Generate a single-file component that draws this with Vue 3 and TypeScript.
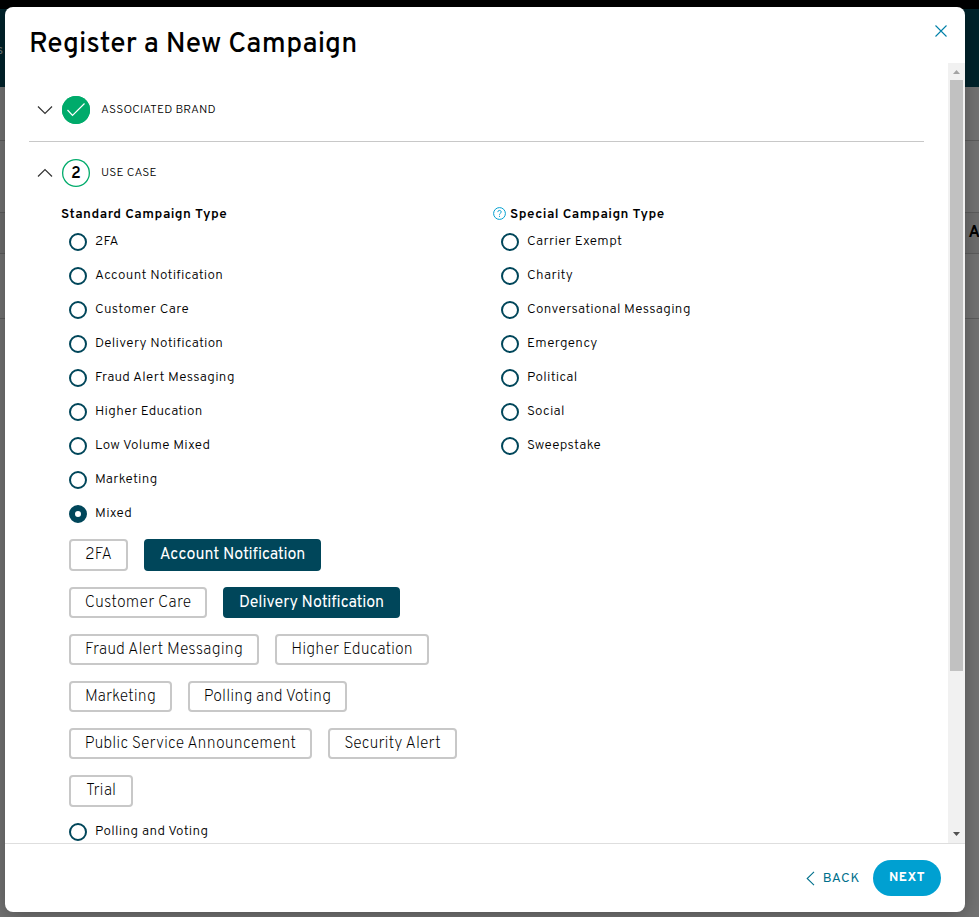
<script setup lang="ts">
import { ref } from 'vue'

interface Chip {
  label: string
  width: number
}

const standard: string[] = [
  '2FA',
  'Account Notification',
  'Customer Care',
  'Delivery Notification',
  'Fraud Alert Messaging',
  'Higher Education',
  'Low Volume Mixed',
  'Marketing',
  'Mixed',
]
const trailing: string[] = ['Polling and Voting']
const special: string[] = [
  'Carrier Exempt',
  'Charity',
  'Conversational Messaging',
  'Emergency',
  'Political',
  'Social',
  'Sweepstake',
]
const chips: Chip[][] = [
  [{ label: '2FA', width: 59 }, { label: 'Account Notification', width: 177 }],
  [{ label: 'Customer Care', width: 138 }, { label: 'Delivery Notification', width: 177 }],
  [{ label: 'Fraud Alert Messaging', width: 190 }, { label: 'Higher Education', width: 154 }],
  [{ label: 'Marketing', width: 103 }, { label: 'Polling and Voting', width: 159 }],
  [{ label: 'Public Service Announcement', width: 243 }, { label: 'Security Alert', width: 129 }],
  [{ label: 'Trial', width: 64 }],
]

const selected = ref('Mixed')
const picked = ref<string[]>(['Account Notification', 'Delivery Notification'])

function toggle(label: string): void {
  picked.value = picked.value.includes(label)
    ? picked.value.filter((p) => p !== label)
    : [...picked.value, label]
}
</script>

<template>
  <div class="screen">
    <div class="page">
      <div class="topbar"></div>
      <div class="nav"><span>s</span></div>
      <div class="row r1"></div>
      <div class="row r2"></div>
      <div class="row r3"><b>A</b></div>
      <div class="row r4"></div>
    </div>

    <section class="modal">
      <header class="head">
        <h1>Register a New Campaign</h1>
        <button class="close" aria-label="Close">
          <svg width="12" height="12" viewBox="0 0 12 12"><path d="M.5.5l11 11M11.5.5l-11 11" /></svg>
        </button>
      </header>

      <div class="body">
        <div class="content">
          <div class="step first">
            <svg class="chev" width="16" height="10" viewBox="0 0 16 10"><path d="M1 1.5l7 7 7-7" /></svg>
            <span class="badge done">
              <svg width="20" height="15" viewBox="0 0 20 15"><path d="M1.500 8l5 5.500L18.500 1.500" /></svg>
            </span>
            <span class="step-name">ASSOCIATED BRAND</span>
          </div>
          <div class="step second">
            <svg class="chev" width="16" height="10" viewBox="0 0 16 10"><path d="M1 8.5l7-7 7 7" /></svg>
            <span class="badge"><span class="num">2</span></span>
            <span class="step-name">USE CASE</span>
          </div>

          <div class="columns">
            <div class="column">
              <h2><span>Standard Campaign Type</span></h2>
              <label v-for="o in standard" :key="o" class="option" @click="selected = o">
                <i class="radio" :class="{ on: selected === o }"></i>
                <span>{{ o }}</span>
              </label>
              <div class="chips">
                <div v-for="(line, i) in chips" :key="i" class="chip-line">
                  <button
                    v-for="c in line"
                    :key="c.label"
                    class="chip"
                    :class="{ active: picked.includes(c.label) }"
                    :style="{ width: c.width + 'px' }"
                    @click="toggle(c.label)"
                  >{{ c.label }}</button>
                </div>
              </div>
              <label v-for="o in trailing" :key="o" class="option" @click="selected = o">
                <i class="radio" :class="{ on: selected === o }"></i>
                <span>{{ o }}</span>
              </label>
            </div>
            <div class="column">
              <h2 class="special">
                <svg width="13" height="13" viewBox="0 0 13 13">
                  <circle cx="6.5" cy="6.5" r="5.9" />
                  <path d="M4.8 5.1c0-2.3 3.4-2.2 3.4-.1 0 1.300-1.700 1.200-1.700 2.700M6.500 8.800v1.100" />
                </svg>
                <span>Special Campaign Type</span>
              </h2>
              <label v-for="o in special" :key="o" class="option" @click="selected = o">
                <i class="radio" :class="{ on: selected === o }"></i>
                <span>{{ o }}</span>
              </label>
            </div>
          </div>
        </div>
        <div class="scrollbar">
          <svg class="up" width="17" height="17" viewBox="0 0 17 17"><path d="M5 11l3.500-4 3.500 4z" /></svg>
          <div class="thumb"></div>
          <svg class="down" width="17" height="17" viewBox="0 0 17 17"><path d="M5 6h7L8.500 10z" /></svg>
        </div>
      </div>

      <footer class="foot">
        <button class="back">
          <svg width="9" height="15" viewBox="0 0 9 15"><path d="M8 .8L1.200 7.500 8 14.200" /></svg>
          <span>BACK</span>
        </button>
        <button class="next">NEXT</button>
      </footer>
    </section>
  </div>
</template>

<style>
body {
  overflow: hidden;
}
</style>

<style scoped>
* {
  box-sizing: border-box;
}
.screen {
  position: relative;
  height: 917px;
  overflow: hidden;
  padding: 7px 14px 5px 5px;
  font-family: Overpass, Roboto, "Liberation Sans", sans-serif;
  color: #000;
}
.page {
  position: absolute;
  inset: 0;
  background: #737373;
}
.topbar {
  height: 9px;
  background: #000;
}
.nav {
  height: 78px;
  padding-top: 34px;
  background: #00232b;
  color: #6b7678;
  font-size: 13px;
  line-height: 16px;
}
.nav span {
  margin-left: -3px;
}
.row {
  border-bottom: 1px solid #5d5d5d;
}
.r1 {
  height: 54px;
}
.r2 {
  height: 72px;
}
.r3 {
  display: flex;
  align-items: center;
  justify-content: flex-end;
  height: 41px;
  background: #6e6e6e;
  font-size: 16px;
}
.r3 b {
  margin-right: -1px;
}
.r4 {
  height: 65px;
}
.modal {
  position: relative;
  display: flex;
  flex-direction: column;
  height: 905px;
  border-radius: 8px;
  background: #fff;
  box-shadow: 0 3px 20px rgba(0, 0, 0, 0.3);
  overflow: hidden;
}
button {
  border: 0;
  padding: 0;
  background: none;
  font-family: inherit;
}
svg {
  display: block;
  flex: none;
  fill: none;
}
.head {
  display: flex;
  flex: none;
  justify-content: space-between;
  height: 56px;
  padding: 18px 18px 0 24px;
}
h1 {
  margin: 0;
  padding-top: 3px;
  font-size: 28px;
  font-weight: 500;
  line-height: 35px;
  letter-spacing: 0.100px;
  white-space: nowrap;
}
.close {
  align-self: flex-start;
}
.close svg {
  stroke: #0080a8;
  stroke-width: 1.100;
}
.body {
  display: flex;
  flex: none;
  height: 780px;
}
.content {
  flex: 1;
  overflow: hidden;
  padding: 15px 24px 0 24px;
}
.step {
  display: flex;
  align-items: center;
  height: 64px;
  padding-left: 8px;
}
.first {
  border-bottom: 1px solid #c8c8c8;
}
.second {
  height: 61px;
}
.chev {
  margin-right: 9px;
  stroke: #333;
  stroke-width: 1.200;
}
.badge {
  display: flex;
  align-items: center;
  justify-content: center;
  width: 28px;
  height: 28px;
  margin-right: 11px;
  border-radius: 50%;
  box-shadow: inset 0 0 0 1.300px #00ab6b;
  font-size: 16px;
  font-weight: 600;
}
.num {
  padding-top: 2px;
}
.done {
  background: #00ab6b;
}
.done svg {
  stroke: #fff;
  stroke-width: 1.200;
}
.step-name {
  padding-top: 1px;
  font-size: 12px;
  font-weight: 300;
  letter-spacing: 0.160px;
}
.columns {
  display: grid;
  grid-template-columns: 432px 1fr;
  padding-left: 32px;
}
h2 {
  display: flex;
  align-items: center;
  height: 22px;
  margin: 0;
  font-size: 13.500px;
  font-weight: 600;
  letter-spacing: 0.460px;
  white-space: nowrap;
}
h2 span {
  line-height: 16px;
  padding-top: 1px;
}
.special svg {
  margin-right: 4px;
  margin-bottom: 1px;
  stroke: #009fd0;
  stroke-width: 1;
}
.option {
  display: flex;
  align-items: center;
  height: 34px;
  padding-left: 8px;
  font-size: 13.500px;
  font-weight: 300;
  line-height: 16px;
  letter-spacing: 0.310px;
  white-space: nowrap;
}
.radio {
  flex: none;
  width: 18px;
  height: 18px;
  margin-right: 8px;
  border: 2px solid #00465a;
  border-radius: 50%;
}
.radio.on {
  border-width: 6px;
}
.chips {
  display: grid;
  gap: 16px;
  margin: 8.400px 0 8.400px 8px;
}
.chip-line {
  display: flex;
  gap: 16px;
  height: 31.200px;
}
.chip {
  flex: none;
  height: 31.200px;
  padding-top: 0.900px;
  border: 2px solid #c8c8c8;
  border-radius: 4px;
  background: #fff;
  color: #000;
  font-size: 16px;
  font-weight: 200;
  letter-spacing: 0.060px;
  white-space: nowrap;
}
.chip.active {
  border-color: #00465a;
  background: #00465a;
  color: #fff;
  font-weight: 400;
  letter-spacing: -0.050px;
}
.scrollbar {
  display: flex;
  flex: none;
  flex-direction: column;
  width: 17px;
  background: #f1f1f1;
}
.up {
  fill: #a3a3a3;
}
.down {
  margin-top: auto;
  fill: #505050;
}
.thumb {
  height: 591px;
  margin: 0 2px;
  background: #c1c1c1;
}
.foot {
  display: flex;
  flex: 1;
  align-items: center;
  justify-content: flex-end;
  padding-right: 24px;
  border-top: 1px solid #dedede;
}
.back {
  display: flex;
  align-items: center;
  gap: 8px;
  margin-right: 13px;
  color: #00708c;
  font-size: 13.500px;
  letter-spacing: 0.700px;
}
.back span {
  padding-top: 2px;
  line-height: 16px;
}
.back svg {
  stroke: #00708c;
  stroke-width: 1.100;
}
.next {
  width: 68px;
  height: 36px;
  border-radius: 18px;
  background: #00a0d1;
  color: #fff;
  font-size: 13px;
  font-weight: 700;
  letter-spacing: 0.500px;
}
</style>
